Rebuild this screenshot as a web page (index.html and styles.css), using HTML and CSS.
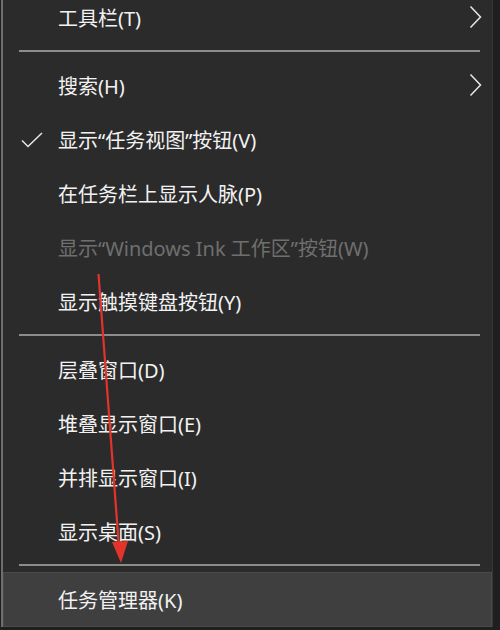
FILE: index.html
```html
<!DOCTYPE html>
<html lang="zh-CN">
<head>
    <meta charset="UTF-8">
    <meta name="viewport" content="width=device-width, initial-scale=1.0">
    <title>任务栏菜单</title>
    <link rel="stylesheet" href="styles.css">
</head>
<body>
    <ul class="menu">
        <li class="item">
            <span class="label">工具栏(T)</span>
            <svg class="chevron" width="13" height="24" viewBox="0 0 13 24"><path d="M1.5 1.5 L11.5 12 L1.5 22.5" fill="none" stroke="#e8e8e8" stroke-width="1.5"/></svg>
        </li>
        <li class="sep"></li>
        <li class="item">
            <span class="label">搜索(H)</span>
            <svg class="chevron" width="13" height="24" viewBox="0 0 13 24"><path d="M1.5 1.5 L11.5 12 L1.5 22.5" fill="none" stroke="#e8e8e8" stroke-width="1.5"/></svg>
        </li>
        <li class="item">
            <svg class="check" width="22" height="16" viewBox="0 0 22 16"><path d="M1 8.5 L7 14.5 L21 1" fill="none" stroke="#e8e8e8" stroke-width="1.5"/></svg>
            <span class="label">显示“任务视图”按钮(V)</span>
        </li>
        <li class="item">
            <span class="label">在任务栏上显示人脉(P)</span>
        </li>
        <li class="item disabled">
            <span class="label">显示“Windows Ink 工作区”按钮(W)</span>
        </li>
        <li class="item">
            <span class="label">显示触摸键盘按钮(Y)</span>
        </li>
        <li class="sep"></li>
        <li class="item">
            <span class="label">层叠窗口(D)</span>
        </li>
        <li class="item">
            <span class="label">堆叠显示窗口(E)</span>
        </li>
        <li class="item">
            <span class="label">并排显示窗口(I)</span>
        </li>
        <li class="item">
            <span class="label">显示桌面(S)</span>
        </li>
        <li class="sep"></li>
        <li class="item active">
            <span class="label">任务管理器(K)</span>
        </li>
    </ul>

    <!-- red annotation arrow drawn over the menu -->
    <svg class="annotation" width="500" height="630" viewBox="0 0 500 630">
        <line x1="98.5" y1="274" x2="119" y2="548" stroke="#e3342b" stroke-width="2.2"/>
        <path d="M112 542 L128 541 L121 563 Z" fill="#e3342b"/>
    </svg>
</body>
</html>
```

FILE: styles.css
```css
body {
    margin: 0;
    padding: 0;
    background-color: #1f1f1f;
    font-family: "Noto Sans", "Noto Sans CJK SC", sans-serif;
    overflow: hidden;
}

.menu {
    list-style: none;
    margin: -10px 0 0 1px;
    padding: 0;
    width: 492px;
    box-sizing: border-box;
    background-color: #2b2b2b;
    border-left: 2px solid #6e6e6e;
    border-right: 1px solid #363636;
}

.item {
    position: relative;
    display: flex;
    align-items: center;
    height: 54px;
    padding-left: 55px;
    color: #f2f2f2;
    font-size: 20px;
    box-sizing: border-box;
}

.item.disabled {
    color: #6f6f6f;
}

.item.active {
    background-color: #3f3f3f;
    border: 1px solid #4a4a4a;
    padding-left: 54px;
    height: 55px;
}

.check {
    position: absolute;
    left: 18px;
    top: 20px;
}

.chevron {
    margin-left: auto;
    margin-right: 10px;
}

.sep {
    height: 2px;
    margin: 6px 12px 6px 16px;
    background-color: #8c8c8c;
}

.annotation {
    position: absolute;
    left: 0;
    top: 0;
    pointer-events: none;
}
```
